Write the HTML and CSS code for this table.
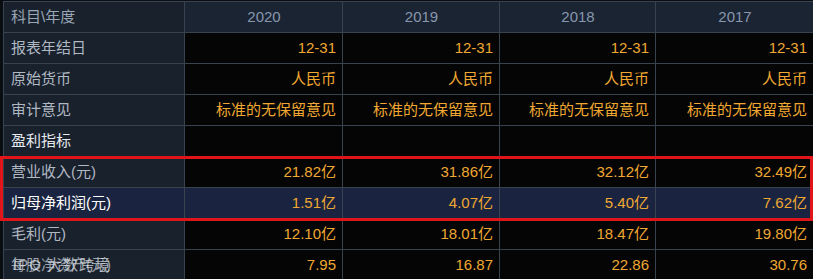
FILE: index.html
```html
<!DOCTYPE html>
<html lang="zh">
<head>
<meta charset="utf-8">
<link rel="stylesheet" href="styles.css">
</head>
<body>
<div class="wrap">
  <table class="fin">
    <colgroup>
      <col class="c0"><col class="c1"><col class="c2"><col class="c3"><col class="c4">
    </colgroup>
    <tr class="head">
      <th class="lab">科目\年度</th><th>2020</th><th>2019</th><th>2018</th><th>2017</th>
    </tr>
    <tr>
      <td class="lab">报表年结日</td><td>12-31</td><td>12-31</td><td>12-31</td><td>12-31</td>
    </tr>
    <tr>
      <td class="lab">原始货币</td><td>人民币</td><td>人民币</td><td>人民币</td><td>人民币</td>
    </tr>
    <tr>
      <td class="lab">审计意见</td><td>标准的无保留意见</td><td>标准的无保留意见</td><td>标准的无保留意见</td><td>标准的无保留意见</td>
    </tr>
    <tr>
      <td class="lab sec">盈利指标</td><td></td><td></td><td></td><td></td>
    </tr>
    <tr>
      <td class="lab">营业收入(元)</td><td>21.82亿</td><td>31.86亿</td><td>32.12亿</td><td>32.49亿</td>
    </tr>
    <tr class="hl">
      <td class="lab">归母净利润(元)</td><td>1.51亿</td><td>4.07亿</td><td>5.40亿</td><td>7.62亿</td>
    </tr>
    <tr>
      <td class="lab">毛利(元)</td><td>12.10亿</td><td>18.01亿</td><td>18.47亿</td><td>19.80亿</td>
    </tr>
    <tr>
      <td class="lab"><span class="under">每股净资产(元)</span><span class="wm">IPO 大数跨境</span></td><td>7.95</td><td>16.87</td><td>22.86</td><td>30.76</td>
    </tr>
  </table>
  <div class="redbox"></div>
</div>
</body>
</html>
```

FILE: styles.css
```css
html, body {
  margin: 0;
  padding: 0;
  background: #0a0d12;
  width: 813px;
  height: 279px;
  overflow: hidden;
}
.wrap {
  position: relative;
  padding: 1px 0 0 3px;
}
.fin {
  border-collapse: collapse;
  table-layout: fixed;
  width: 810px;
  font-family: "Liberation Sans", "Noto Sans CJK SC", sans-serif;
  font-size: 15px;
}
.c0 { width: 181px; }
.c1 { width: 158px; }
.c2 { width: 157px; }
.c3 { width: 156px; }
.c4 { width: 158px; }
.fin th, .fin td {
  border: 1px solid #39434f;
  height: 30px;
  padding: 0 6px 0 7px;
  box-sizing: content-box;
  white-space: nowrap;
  overflow: hidden;
  line-height: 20px;
}
.fin td {
  background: #050505;
  color: #f0a832;
  text-align: right;
}
.fin th {
  background: #1b2433;
  color: #8797ad;
  font-weight: normal;
  text-align: center;
}
.fin .lab {
  background: #19212d;
  color: #b0b8c2;
  text-align: left;
  position: relative;
}
.fin .head .lab { color: #9aa6b5; }
.fin .sec { color: #e6eaef; }
.fin .hl td { background: #1a2440; }
.fin .hl .lab { color: #ffffff; background: #1a2440; }
.under { color: #9aa2ab; }
.wm {
  position: absolute;
  left: 9px;
  top: 5px;
  color: rgba(225, 230, 236, 0.72);
  font-size: 15px;
  letter-spacing: 1px;
}
.redbox {
  position: absolute;
  left: 0;
  top: 156px;
  width: 813px;
  height: 65px;
  box-sizing: border-box;
  border: 3px solid #e0151a;
}
```
